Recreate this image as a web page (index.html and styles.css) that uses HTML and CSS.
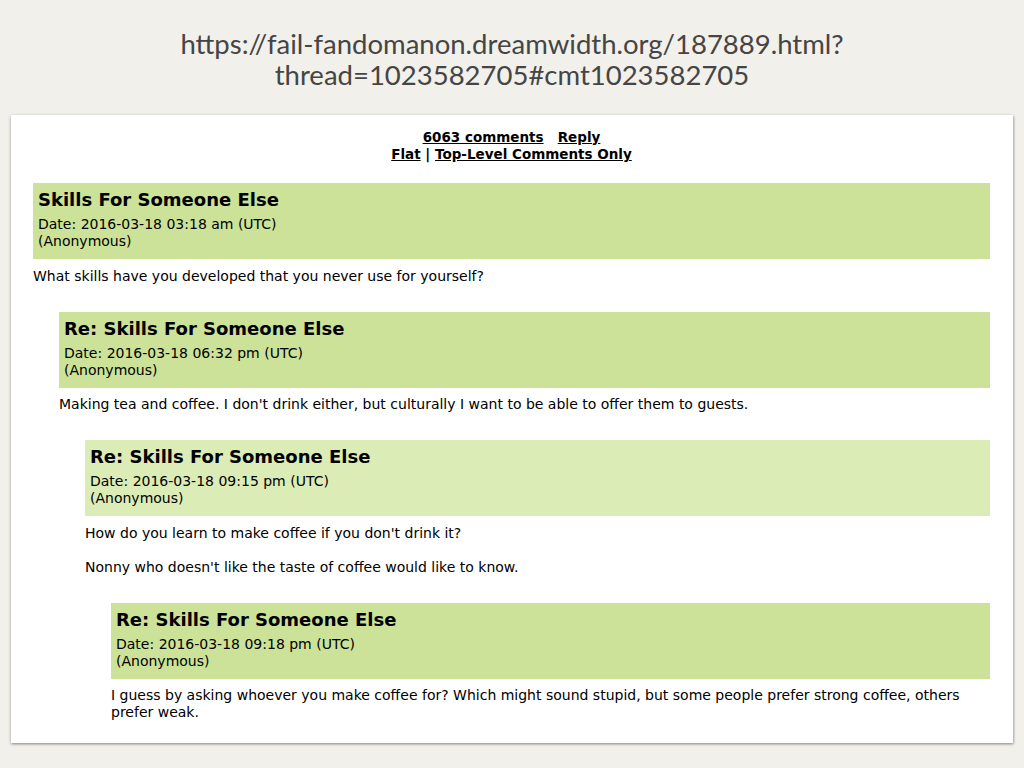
FILE: index.html
```html
<!DOCTYPE html>
<html>
<head>
<meta charset="utf-8">
<link rel="stylesheet" href="styles.css">
</head>
<body>
<div class="url">https://fail-fandomanon.dreamwidth.org/187889.html?<br>thread=1023582705#cmt1023582705</div>
<div class="panel">
  <div class="nav">
    <div><a href="#">6063 comments</a>&nbsp;&nbsp; <a href="#">Reply</a></div>
    <div><a href="#">Flat</a> | <a href="#">Top-Level Comments Only</a></div>
  </div>
  <div class="thread">
    <div class="comment">
      <div class="head">
        <div class="title">Skills For Someone Else</div>
        <div class="meta">Date: 2016-03-18 03:18 am (UTC)<br>(Anonymous)</div>
      </div>
      <div class="body">What skills have you developed that you never use for yourself?</div>
      <div class="comment">
        <div class="head">
          <div class="title">Re: Skills For Someone Else</div>
          <div class="meta">Date: 2016-03-18 06:32 pm (UTC)<br>(Anonymous)</div>
        </div>
        <div class="body">Making tea and coffee. I don't drink either, but culturally I want to be able to offer them to guests.</div>
        <div class="comment">
          <div class="head light">
            <div class="title">Re: Skills For Someone Else</div>
            <div class="meta">Date: 2016-03-18 09:15 pm (UTC)<br>(Anonymous)</div>
          </div>
          <div class="body">How do you learn to make coffee if you don't drink it?<br><br>Nonny who doesn't like the taste of coffee would like to know.</div>
          <div class="comment">
            <div class="head">
              <div class="title">Re: Skills For Someone Else</div>
              <div class="meta">Date: 2016-03-18 09:18 pm (UTC)<br>(Anonymous)</div>
            </div>
            <div class="body">I guess by asking whoever you make coffee for? Which might sound stupid, but some people prefer strong coffee, others prefer weak.</div>
          </div>
        </div>
      </div>
    </div>
  </div>
</div>
</body>
</html>
```
FILE: styles.css
```css
html, body {
  margin: 0;
  padding: 0;
}
body {
  background: #f2f0ea;
  width: 1024px;
  height: 768px;
  overflow: hidden;
}
.url {
  font-family: Lato, "Open Sans", sans-serif;
  font-size: 27.5px;
  line-height: 31px;
  color: #454545;
  text-align: center;
  padding-top: 28px;
  height: 87px;
  box-sizing: border-box;
}
.panel {
  margin: 28px 11px 0 11px;
  height: 628px;
  background: #fff;
  box-shadow: 0 1px 3px rgba(0,0,0,0.35), 1px 1px 2px rgba(0,0,0,0.15);
  box-sizing: border-box;
  padding: 14px 23px 0 22px;
  font-family: Verdana, "DejaVu Sans", sans-serif;
  font-size: 14px;
  line-height: 17px;
  color: #000;
}
.nav {
  text-align: center;
  font-weight: bold;
  font-size: 13.5px;
}
.nav a {
  color: #000;
  text-decoration: underline;
}
.thread {
  margin-top: 20px;
}
.comment .comment {
  margin-left: 26px;
  margin-top: 27px;
}
.head {
  background: #cbe298;
  padding: 6px 6px 9px 5px;
}
.head.light {
  background: #dcecb6;
}
.title {
  font-size: 18px;
  line-height: 22px;
  font-weight: bold;
  margin-bottom: 5px;
}
.body {
  margin-top: 8.5px;
}
```
